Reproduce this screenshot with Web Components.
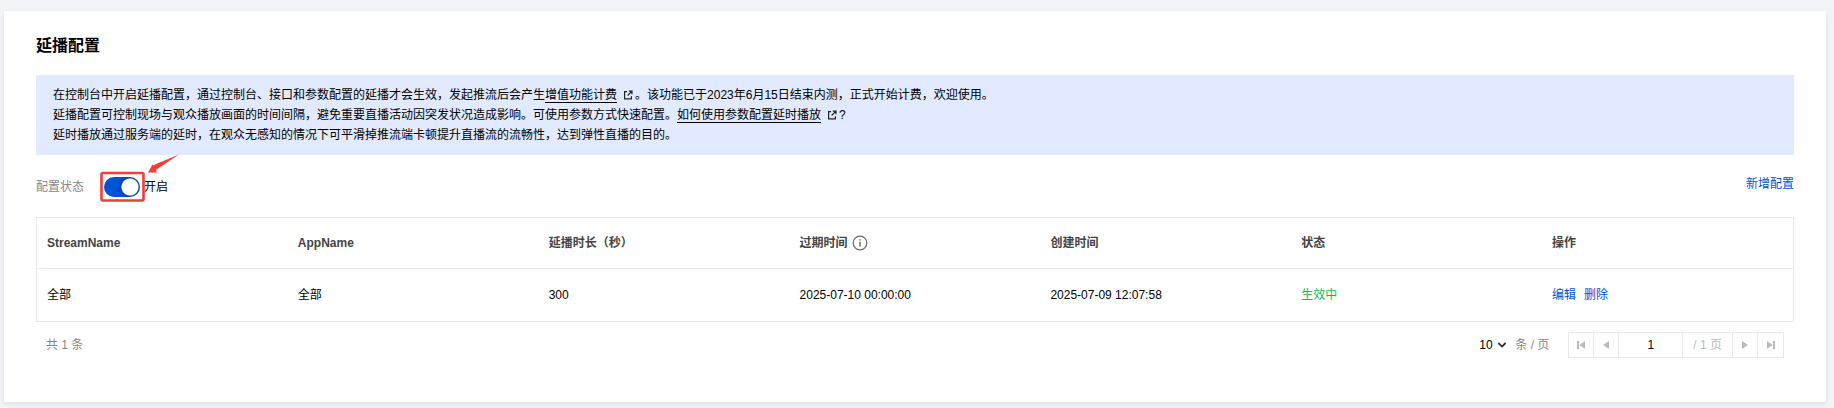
<!DOCTYPE html>
<html lang="zh-CN">
<head>
<meta charset="utf-8">
<title>延播配置</title>
<style>
    body {
        margin: 0;
        padding: 11px 8px 6px 4px;
        background: #f2f3f7;
        color: #000;
        font: 12px/20px "Liberation Sans", "Noto Sans CJK SC", sans-serif;
    }
</style>
</head>
<body>
<delay-card heading="延播配置">
    <info-alert>
        <div>在控制台中开启延播配置，通过控制台、接口和参数配置的延播才会生效，发起推流后会产生<external-link>增值功能计费</external-link>。该功能已于2023年6月15日结束内测，正式开始计费，欢迎使用。</div>
        <div>延播配置可控制现场与观众播放画面的时间间隔，避免重要直播活动因突发状况造成影响。可使用参数方式快速配置。<external-link>如何使用参数配置延时播放</external-link>?</div>
        <div>延时播放通过服务端的延时，在观众无感知的情况下可平滑掉推流端卡顿提升直播流的流畅性，达到弹性直播的目的。</div>
    </info-alert>
    <config-bar>
        <toggle-switch label="配置状态" checked>开启</toggle-switch>
        <text-link slot="action">新增配置</text-link>
    </config-bar>
    <config-table></config-table>
    <page-nav total="1" page="1" pages="1"></page-nav>
</delay-card>

<script>
class DelayCard extends HTMLElement {
    constructor() {
        super();
        this.attachShadow({ mode: 'open' });
    }

    connectedCallback() {
        this.shadowRoot.innerHTML = `
            <style>
                :host {
                    display: block;
                    padding: 23px 32px 44px;
                    background: #fff;
                    box-shadow: 0 2px 4px rgba(54, 58, 80, 0.1);
                }
                h1 {
                    margin: 0 0 17px;
                    font-size: 16px;
                    line-height: 24px;
                    font-weight: 700;
                }
            </style>
            <h1>${this.getAttribute('heading')}</h1>
            <slot></slot>
        `;
    }
}

class InfoAlert extends HTMLElement {
    constructor() {
        super();
        this.attachShadow({ mode: 'open' });
        this.shadowRoot.innerHTML = `
            <style>
                :host {
                    display: block;
                    padding: 10px 17px;
                    background: #e1eaff;
                }
            </style>
            <slot></slot>
        `;
    }
}

class ExternalLink extends HTMLElement {
    constructor() {
        super();
        this.attachShadow({ mode: 'open' });
        // no whitespace round the link, it sits inside running text
        this.shadowRoot.innerHTML = `<style>
                :host {
                    display: inline;
                }
                a {
                    color: inherit;
                    text-decoration: none;
                }
                span {
                    border-bottom: 1px solid #000;
                }
                svg {
                    width: 10px;
                    height: 10px;
                    margin: 0 2px 0 6px;
                    vertical-align: -1px;
                }
            </style><a href="#"><span><slot></slot></span><svg viewBox="0 0 10 10" fill="none" stroke="#222" stroke-width="1.2"><path d="M4 1.6H1.6V8.9H8.4V6.2M5.8 1.1H9V4.3M8.8 1.3L4.6 5.5"/></svg></a>`;
    }
}

class TextLink extends HTMLElement {
    constructor() {
        super();
        this.attachShadow({ mode: 'open' });
        this.shadowRoot.innerHTML = `
            <style>
                :host {
                    display: inline-block;
                }
                a {
                    color: #0052d9;
                    text-decoration: none;
                }
            </style>
            <a href="#"><slot></slot></a>
        `;
    }
}

class ConfigBar extends HTMLElement {
    constructor() {
        super();
        this.attachShadow({ mode: 'open' });
        this.shadowRoot.innerHTML = `
            <style>
                :host {
                    display: flex;
                    justify-content: space-between;
                    align-items: flex-start;
                    padding: 19px 0 17px;
                }
            </style>
            <slot></slot>
            <slot name="action"></slot>
        `;
    }
}

class ToggleSwitch extends HTMLElement {
    constructor() {
        super();
        this.attachShadow({ mode: 'open' });
    }

    connectedCallback() {
        this.shadowRoot.innerHTML = `
            <style>
                :host {
                    display: flex;
                    align-items: center;
                    line-height: 26px;
                }
                .label {
                    margin-right: 20px;
                    color: #888;
                }
                .control {
                    display: flex;
                    align-items: center;
                    position: relative;
                    margin-right: 4px;
                }
                input {
                    appearance: none;
                    width: 36px;
                    height: 20px;
                    margin: 0;
                    border-radius: 10px;
                    background: radial-gradient(circle at 26px 10px, #fff 8px, #0047b8 9px, #0052d9 14px);
                }
                input:not(:checked) {
                    background: radial-gradient(circle at 10px 10px, #fff 8px, #bbb 9px);
                }
                /* marker drawn over the switch */
                .mark {
                    position: absolute;
                    left: -5px;
                    top: -24px;
                    width: 80px;
                    height: 56px;
                    pointer-events: none;
                }
            </style>
            <label class="label" for="state">${this.getAttribute('label')}</label>
            <span class="control">
                <input type="checkbox" id="state" ${this.hasAttribute('checked') ? 'checked' : ''}>
                <svg class="mark" viewBox="0 0 80 56">
                    <rect x="2.5" y="20" width="42" height="27.5" rx="1.5" fill="none" stroke="#f93a3a" stroke-width="2.6"/>
                    <path d="M80 1.5L57 11L54.5 12.5L53.5 11.5L49 19.5L58 19.5L56.8 17Z" fill="#f93a3a"/>
                </svg>
            </span>
            <label for="state"><slot></slot></label>
        `;
    }
}

class ConfigTable extends HTMLElement {
    constructor() {
        super();
        this.attachShadow({ mode: 'open' });
    }

    connectedCallback() {
        this.shadowRoot.innerHTML = `
            <style>
                :host {
                    display: block;
                    border: 1px solid #e7e8f0;
                }
                table {
                    width: 100%;
                    table-layout: fixed;
                    border-collapse: collapse;
                }
                th, td {
                    padding: 16px 10px;
                    text-align: left;
                }
                th {
                    padding: 15px 10px;
                    color: #444;
                    font-weight: 700;
                    border-bottom: 1px solid #e7e8f0;
                }
                svg {
                    width: 16px;
                    height: 16px;
                    margin-left: 4px;
                    vertical-align: -4px;
                }
                .ok {
                    color: #0abf5b;
                }
                text-link {
                    margin-right: 8px;
                }
            </style>
            <table>
                <thead>
                    <tr>
                        <th>StreamName</th>
                        <th>AppName</th>
                        <th>延播时长（秒）</th>
                        <th>过期时间<svg viewBox="0 0 16 16" fill="none" stroke="#666"><circle cx="8" cy="8" r="6.8" stroke-width="1.2"/><path d="M8 6.8V11.6M8 4.2V5.6" stroke="#888" stroke-width="1.8"/></svg></th>
                        <th>创建时间</th>
                        <th>状态</th>
                        <th>操作</th>
                    </tr>
                </thead>
                <tbody>
                    <tr>
                        <td>全部</td>
                        <td>全部</td>
                        <td>300</td>
                        <td>2025-07-10 00:00:00</td>
                        <td>2025-07-09 12:07:58</td>
                        <td class="ok">生效中</td>
                        <td><text-link>编辑</text-link><text-link>删除</text-link></td>
                    </tr>
                </tbody>
            </table>
        `;
    }
}

class PageNav extends HTMLElement {
    constructor() {
        super();
        this.attachShadow({ mode: 'open' });
    }

    connectedCallback() {
        this.shadowRoot.innerHTML = `
            <style>
                :host {
                    display: flex;
                    align-items: center;
                    padding: 10px 10px 0;
                    color: #888;
                }
                .total {
                    flex: 1;
                }
                .size {
                    position: relative;
                    display: flex;
                    align-items: center;
                    margin-right: 8px;
                }
                .size svg {
                    width: 10px;
                    height: 10px;
                    margin-left: -10px;
                    pointer-events: none;
                }
                select, input, button {
                    margin: 0;
                    padding: 0;
                    border: 0;
                    border-radius: 0;
                    background: none;
                    font: inherit;
                    color: #000;
                }
                select {
                    appearance: none;
                    width: 28px;
                }
                .pager {
                    display: flex;
                    height: 24px;
                    line-height: 24px;
                    margin-left: 19px;
                    border: 1px solid #e7e8f0;
                }
                .pager > * + * {
                    border-left: 1px solid #e7e8f0;
                }
                button {
                    display: flex;
                    align-items: center;
                    justify-content: center;
                    width: 25px;
                }
                button:first-child {
                    width: 24px;
                }
                button:last-child {
                    width: 26px;
                }
                button svg {
                    width: 10px;
                    height: 10px;
                    fill: #bbb;
                }
                input {
                    box-sizing: border-box;
                    width: 64px;
                    text-align: center;
                }
                .pages {
                    padding: 0 10px;
                    color: #bbb;
                }
            </style>
            <span class="total">共 ${this.getAttribute('total')} 条</span>
            <span class="size">
                <select id="size" aria-label="每页条数"><option>10</option><option>20</option><option>50</option></select>
                <svg viewBox="0 0 10 10" fill="none" stroke="#333" stroke-width="1.8"><path d="M1.4 3L5 6.6L8.6 3"/></svg>
            </span>
            <label for="size">条 / 页</label>
            <div class="pager">
                <button disabled aria-label="首页"><svg viewBox="0 0 10 10"><path d="M1 1H3V9H1ZM9 1V9L3.4 5Z"/></svg></button>
                <button disabled aria-label="上一页"><svg viewBox="0 0 10 10"><path d="M8 1V9L2 5Z"/></svg></button>
                <input type="text" aria-label="页码" value="${this.getAttribute('page')}">
                <span class="pages">/ ${this.getAttribute('pages')} 页</span>
                <button disabled aria-label="下一页"><svg viewBox="0 0 10 10"><path d="M2 1V9L8 5Z"/></svg></button>
                <button disabled aria-label="末页"><svg viewBox="0 0 10 10"><path d="M7 1H9V9H7ZM1 1V9L6.6 5Z"/></svg></button>
            </div>
        `;
    }
}

customElements.define('delay-card', DelayCard);
customElements.define('info-alert', InfoAlert);
customElements.define('external-link', ExternalLink);
customElements.define('text-link', TextLink);
customElements.define('config-bar', ConfigBar);
customElements.define('toggle-switch', ToggleSwitch);
customElements.define('config-table', ConfigTable);
customElements.define('page-nav', PageNav);
</script>
</body>
</html>
